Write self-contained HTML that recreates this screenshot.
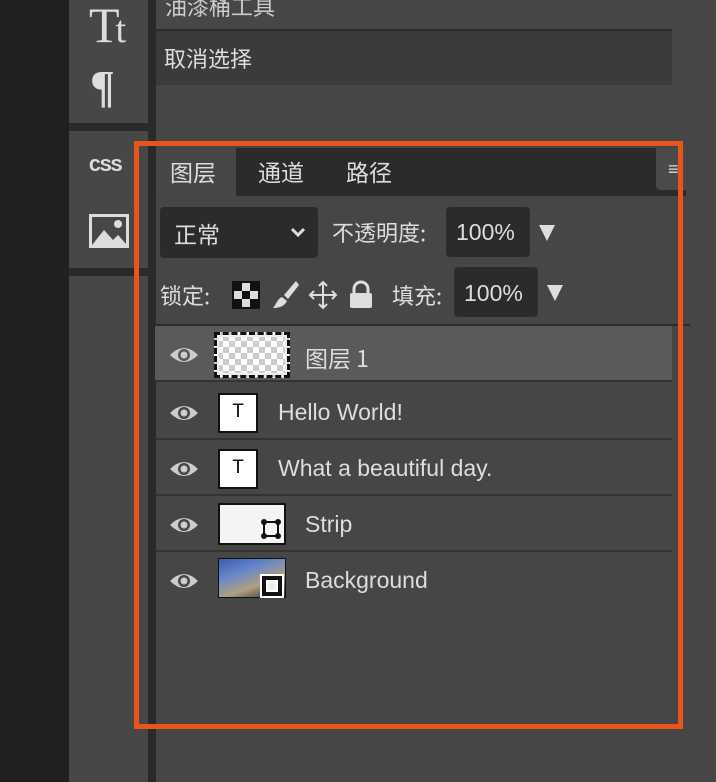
<!DOCTYPE html>
<html><head><meta charset="utf-8"><style>
*{margin:0;padding:0;box-sizing:border-box}
body{width:716px;height:782px;overflow:hidden;background:#464646;position:relative;font-family:"Liberation Sans","Noto Sans CJK SC",sans-serif;color:#ddd}
.a{position:absolute}
.cn{font-family:"Noto Sans CJK SC",sans-serif}
.row{position:absolute;left:155px;width:517px;height:56px;border-bottom:2px solid #333}
.eye{position:absolute;left:14px;top:19px;width:30px;height:20px}
.lt{position:absolute;font-size:23px;color:#ddd;top:15px}
.tT{position:absolute;left:63px;top:9px;width:40px;height:40px;background:#fff;border:2px solid #111;color:#111;font:20px "Liberation Mono",monospace;text-align:center;line-height:36px}
</style></head><body>
<div class="a" style="left:0;top:0;width:69px;height:782px;background:#202020"></div>
<div class="a" style="left:69px;top:0;width:79px;height:782px;background:#474747"></div>
<div class="a" style="left:69px;top:123px;width:79px;height:8px;background:#2a2a2a"></div>
<div class="a" style="left:69px;top:268px;width:79px;height:8px;background:#2a2a2a"></div>
<div class="a" style="left:148px;top:0;width:8px;height:782px;background:#2a2a2a"></div>
<div class="a" style="left:89px;top:-4px;font:50px 'Liberation Serif',serif;color:#ddd;letter-spacing:-4px">T<span style="font-size:38px">t</span></div>
<div class="a" style="left:90px;top:60px;font:bold 46px 'Liberation Serif',serif;color:#ddd">¶</div>
<div class="a" style="left:89px;top:157px;font:bold 18px 'Liberation Mono',monospace;color:#ddd;letter-spacing:-1px;transform:scaleX(1.1);transform-origin:left">CSS</div>
<svg class="a" style="left:89px;top:214px" width="40" height="34" viewBox="0 0 40 34"><rect x="1.5" y="1.5" width="37" height="31" fill="none" stroke="#ddd" stroke-width="3"/><path d="M3 31 L15 16 L24 26 L29 21 L38 31Z" fill="#ddd"/><circle cx="29" cy="10" r="4" fill="#ddd"/></svg>
<div class="a" style="left:156px;top:0;width:560px;height:30px;background:#474747"></div>
<div class="a cn" style="left:165px;top:-10px;font-size:22px;color:#ccc">油漆桶工具</div>
<div class="a" style="left:156px;top:29px;width:516px;height:56px;background:#3b3b3b;border-top:2px solid #2c2c2c"></div>
<div class="a cn" style="left:164px;top:42px;font-size:22px;color:#ddd">取消选择</div>
<div class="a" style="left:156px;top:148px;width:530px;height:48px;background:#2b2b2b"></div>
<div class="a" style="left:156px;top:148px;width:80px;height:48px;background:#474747"></div>
<div class="a cn" style="left:170px;top:154px;font-size:23px;color:#ddd">图层</div>
<div class="a cn" style="left:258px;top:154px;font-size:23px;color:#ddd">通道</div>
<div class="a cn" style="left:346px;top:154px;font-size:23px;color:#ddd">路径</div>
<div class="a" style="left:656px;top:148px;width:30px;height:42px;background:#4a4a4a;border-radius:0 0 0 5px"></div>
<div class="a" style="left:668px;top:159px;font-size:18px;color:#ddd">≡</div>
<div class="a" style="left:160px;top:207px;width:158px;height:51px;background:#2b2b2b;border-radius:4px"></div>
<div class="a cn" style="left:174px;top:216px;font-size:23px;color:#ddd">正常</div>
<svg class="a" style="left:289px;top:226px" width="18" height="12"><path d="M3 3 L9 9 L15 3" fill="none" stroke="#ddd" stroke-width="3"/></svg>
<div class="a cn" style="left:332px;top:216px;font-size:22px;color:#ddd">不透明度:</div>
<div class="a" style="left:446px;top:207px;width:84px;height:50px;background:#2b2b2b;border-radius:4px"></div>
<div class="a" style="left:456px;top:219px;font-size:23px;color:#ddd">100%</div>
<svg class="a" style="left:538px;top:224px" width="18" height="18"><path d="M1 1 H17 L9 17Z" fill="#ddd"/></svg>
<div class="a cn" style="left:160px;top:279px;font-size:22px;color:#ddd">锁定:</div>
<svg class="a" style="left:232px;top:281px" width="28" height="28"><rect x="1" y="1" width="26" height="26" fill="#ddd" stroke="#111" stroke-width="2"/><rect x="2" y="2" width="8" height="8" fill="#111"/><rect x="18" y="2" width="8" height="8" fill="#111"/><rect x="10" y="10" width="8" height="8" fill="#111"/><rect x="2" y="18" width="8" height="8" fill="#111"/><rect x="18" y="18" width="8" height="8" fill="#111"/></svg>
<svg class="a" style="left:270px;top:279px" width="30" height="30"><path d="M26 2 L14 16 L18 20 L29 6Z M12 18 L17 22 C14 28 8 29 3 29 C6 26 7 20 12 18Z" fill="#ddd"/></svg>
<svg class="a" style="left:308px;top:280px" width="30" height="30"><path d="M15 2 V28 M2 15 H28 M11 6 L15 2 L19 6 M11 24 L15 28 L19 24 M6 11 L2 15 L6 19 M24 11 L28 15 L24 19" fill="none" stroke="#ddd" stroke-width="2"/></svg>
<svg class="a" style="left:346px;top:279px" width="30" height="30"><path d="M8 14 V10 A7 7 0 0 1 22 10 V14" fill="none" stroke="#ddd" stroke-width="3"/><rect x="4" y="14" width="22" height="15" rx="2" fill="#ddd"/></svg>
<div class="a cn" style="left:392px;top:279px;font-size:22px;color:#ddd">填充:</div>
<div class="a" style="left:454px;top:267px;width:84px;height:50px;background:#2b2b2b;border-radius:4px"></div>
<div class="a" style="left:464px;top:280px;font-size:23px;color:#ddd">100%</div>
<svg class="a" style="left:546px;top:284px" width="18" height="18"><path d="M1 1 H17 L9 17Z" fill="#ddd"/></svg>
<div class="a" style="left:156px;top:324px;width:534px;height:2px;background:#2c2c2c"></div>
<div class="row" style="top:326px;background:#5a5a5a">
<svg class="eye" viewBox="0 0 30 20"><path d="M1 10 Q15 -4 29 10 Q15 24 1 10Z" fill="#ccc"/><circle cx="15" cy="10" r="6" fill="#555"/><circle cx="15" cy="10" r="3.5" fill="#ccc"/></svg>
<div class="a" style="left:59px;top:6px;width:76px;height:46px;border:3px dashed #111;background:repeating-conic-gradient(#ccc 0 25%,#fff 0 50%) 0 0/12px 12px;outline:2px solid #eee;outline-offset:-5px"></div>
<div class="lt cn" style="left:150px;top:14px;font-size:23px">图层 1</div>
</div>
<div class="row" style="top:384px">
<svg class="eye" viewBox="0 0 30 20"><path d="M1 10 Q15 -4 29 10 Q15 24 1 10Z" fill="#ccc"/><circle cx="15" cy="10" r="6" fill="#464646"/><circle cx="15" cy="10" r="3.5" fill="#ccc"/></svg>
<div class="tT">T</div><div class="lt" style="left:123px">Hello World!</div></div>
<div class="row" style="top:440px">
<svg class="eye" viewBox="0 0 30 20"><path d="M1 10 Q15 -4 29 10 Q15 24 1 10Z" fill="#ccc"/><circle cx="15" cy="10" r="6" fill="#464646"/><circle cx="15" cy="10" r="3.5" fill="#ccc"/></svg>
<div class="tT">T</div><div class="lt" style="left:123px">What a beautiful day.</div></div>
<div class="row" style="top:496px">
<svg class="eye" viewBox="0 0 30 20"><path d="M1 10 Q15 -4 29 10 Q15 24 1 10Z" fill="#ccc"/><circle cx="15" cy="10" r="6" fill="#464646"/><circle cx="15" cy="10" r="3.5" fill="#ccc"/></svg>
<div class="a" style="left:63px;top:7px;width:68px;height:42px;background:#f4f4f4;border:2px solid #111"></div>
<svg class="a" style="left:105px;top:22px" width="22" height="22"><rect x="4" y="4" width="14" height="14" fill="none" stroke="#111" stroke-width="2"/><g fill="#111"><circle cx="4" cy="4" r="3"/><circle cx="18" cy="4" r="3"/><circle cx="4" cy="18" r="3"/><circle cx="18" cy="18" r="3"/></g></svg>
<div class="lt" style="left:150px">Strip</div></div>
<div class="row" style="top:552px;border-bottom:none">
<svg class="eye" viewBox="0 0 30 20"><path d="M1 10 Q15 -4 29 10 Q15 24 1 10Z" fill="#ccc"/><circle cx="15" cy="10" r="6" fill="#464646"/><circle cx="15" cy="10" r="3.5" fill="#ccc"/></svg>
<div class="a" style="left:63px;top:6px;width:68px;height:40px;background:linear-gradient(160deg,#3a5fb0 0%,#6a88c8 35%,#b0a080 65%,#222 100%);border:1px solid #111"></div>
<div class="a" style="left:105px;top:22px;width:24px;height:24px;background:#111;border:2px solid #fff"><div style="margin:4px;width:12px;height:12px;border:2px solid #fff;background:#eee"></div></div>
<div class="lt" style="left:150px">Background</div></div>
<div class="a" style="left:134px;top:141px;width:549px;height:588px;border:5px solid #e8541c"></div>
</body></html>
